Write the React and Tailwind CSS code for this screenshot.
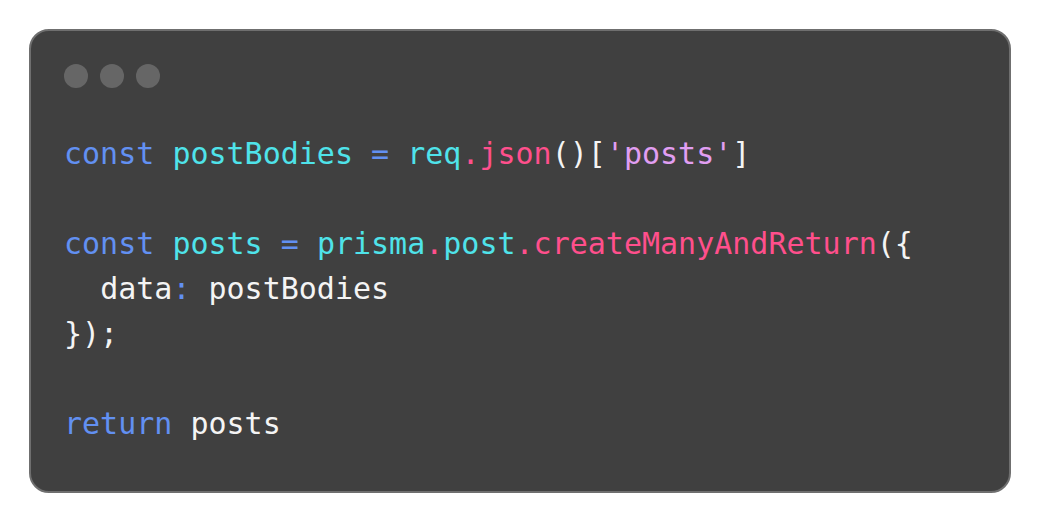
import React from "react";

const B = ({ children }) => <span className="text-[#6290f2]">{children}</span>;
const C = ({ children }) => <span className="text-[#4fe3ea]">{children}</span>;
const P = ({ children }) => <span className="text-[#ff4f8c]">{children}</span>;
const V = ({ children }) => <span className="text-[#e19ef2]">{children}</span>;
const W = ({ children }) => <span className="text-[#f4f4f4]">{children}</span>;

export default function App() {
  return (
    <div className="w-[1040px] h-[522px] bg-white p-[29px]">
      <div className="h-full w-full rounded-[20px] border-2 border-[#6f6f6f] bg-[#404040] pt-[33px] pl-[33px]">
        <div className="flex gap-3">
          <div className="w-6 h-6 rounded-full bg-[#666666]" />
          <div className="w-6 h-6 rounded-full bg-[#666666]" />
          <div className="w-6 h-6 rounded-full bg-[#666666]" />
        </div>
        <pre
          className="mt-[43px] text-[30px] leading-[45px] whitespace-pre"
          style={{ fontFamily: '"DejaVu Sans Mono", "Liberation Mono", monospace' }}
        >
          <div>
            <B>const</B> <C>postBodies</C> <B>=</B> <C>req</C><P>.json</P><W>()[</W><V>'posts'</V><W>]</W>
          </div>
          <div>&nbsp;</div>
          <div>
            <B>const</B> <C>posts</C> <B>=</B> <C>prisma</C><P>.</P><C>post</C><P>.createManyAndReturn</P><W>({"{"}</W>
          </div>
          <div>
            {"  "}<W>data</W><B>:</B> <W>postBodies</W>
          </div>
          <div>
            <W>{"});"}</W>
          </div>
          <div>&nbsp;</div>
          <div>
            <B>return</B> <W>posts</W>
          </div>
        </pre>
      </div>
    </div>
  );
}
